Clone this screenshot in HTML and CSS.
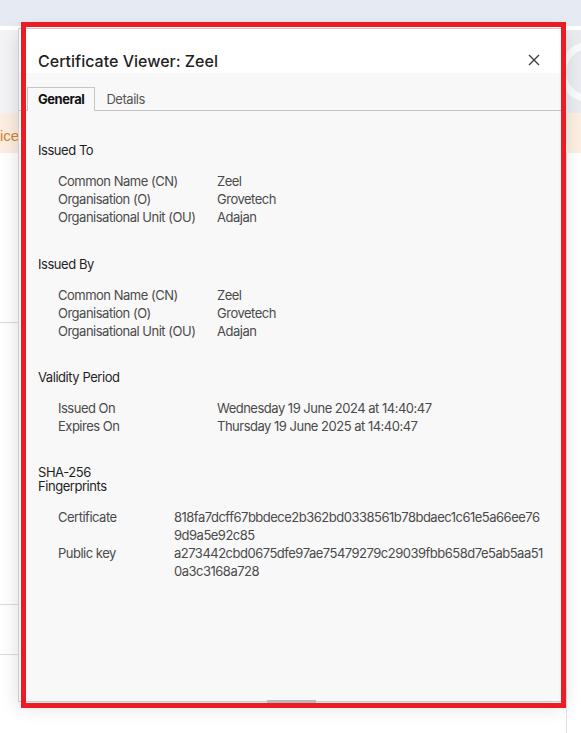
FILE: index.html
```html
<!DOCTYPE html>
<html lang="en">
<head>
<meta charset="utf-8">
<title>Certificate Viewer: Zeel</title>
<link rel="stylesheet" href="styles.css">
</head>
<body>
<div class="page">
  <div class="topbar"></div>
  <div class="app">
    <div class="hero"><div class="logo"></div></div>
    <div class="banner"><span class="banner-text">ice</span></div>
    <div class="list">
      <div class="list-row row-a"></div>
      <div class="list-row row-b"></div>
      <div class="list-row row-c"></div>
      <div class="list-row row-d"></div>
    </div>
  </div>
</div>

<div class="dialog" role="dialog" aria-label="Certificate Viewer: Zeel">
  <div class="dlg-head">
    <h1 class="dlg-title">Certificate Viewer: Zeel</h1>
    <button class="close" aria-label="Close">
      <svg width="12" height="12" viewBox="0 0 12 12"><path d="M1 1 L11 11 M11 1 L1 11" stroke="#3c3c3c" stroke-width="1.4" fill="none"/></svg>
    </button>
  </div>
  <div class="tabs">
    <div class="tab active">General</div>
    <div class="tab">Details</div>
  </div>
  <div class="content">
    <section class="sec">
      <h2 class="sec-title">Issued To</h2>
      <div class="rows">
        <div class="lab">Common Name (CN)</div><div class="val">Zeel</div>
        <div class="lab">Organisation (O)</div><div class="val">Grovetech</div>
        <div class="lab">Organisational Unit (OU)</div><div class="val">Adajan</div>
      </div>
    </section>
    <section class="sec">
      <h2 class="sec-title">Issued By</h2>
      <div class="rows">
        <div class="lab">Common Name (CN)</div><div class="val">Zeel</div>
        <div class="lab">Organisation (O)</div><div class="val">Grovetech</div>
        <div class="lab">Organisational Unit (OU)</div><div class="val">Adajan</div>
      </div>
    </section>
    <section class="sec">
      <h2 class="sec-title">Validity Period</h2>
      <div class="rows">
        <div class="lab">Issued On</div><div class="val">Wednesday 19 June 2024 at 14:40:47</div>
        <div class="lab">Expires On</div><div class="val">Thursday 19 June 2025 at 14:40:47</div>
      </div>
    </section>
    <section class="sec">
      <h2 class="sec-title">SHA-256 Fingerprints</h2>
      <div class="rows rows-fp">
        <div class="lab">Certificate</div><div class="val hash">818fa7dcff67bbdece2b362bd0338561b78bdaec1c61e5a66ee76<br>9d9a5e92c85</div>
        <div class="lab">Public key</div><div class="val hash">a273442cbd0675dfe97ae75479279c29039fbb658d7e5ab5aa51<br>0a3c3168a728</div>
      </div>
    </section>
  </div>
  <div class="dlg-foot"><div class="grip"></div></div>
</div>

<div class="highlight"></div>
</body>
</html>
```

FILE: styles.css
```css
* { box-sizing: border-box; }
html, body { margin: 0; padding: 0; }
body {
  width: 581px;
  height: 733px;
  overflow: hidden;
  background: #fff;
  font-family: Inter, "Liberation Sans", sans-serif;
  position: relative;
}
.page { display: flex; flex-direction: column; }
.topbar { height: 26px; background: #e6eaf2; }
.app { background: #fff; padding-top: 4px; }
.hero {
  height: 83px;
  background: linear-gradient(to right, #f4f4f6, #e9ebf1);
  display: flex;
  align-items: center;
  justify-content: flex-end;
  overflow: hidden;
}
.logo {
  width: 60px; height: 60px;
  border-radius: 50%;
  border: 7px solid rgba(255,255,255,0.75);
  margin-right: -38px;
}
.banner {
  height: 40px;
  padding-top: 5px;
  background: #fcefe1;
  display: flex;
  align-items: center;
  overflow: hidden;
}
.banner-text {
  color: #d3822f;
  font-size: 15px;
  font-family: "Liberation Sans", sans-serif;
}
.list { width: 567px; border-right: 1px solid #e2e2e2; }
.list-row { border-bottom: 1px solid #dcdcdc; }
.row-a { height: 170px; }
.row-b { height: 282px; }
.row-c { height: 50px; }
.row-d { height: 80px; border-bottom: none; }

.dialog {
  position: absolute;
  left: 18px;
  top: 28px;
  width: 546px;
  height: 674px;
  background: #f8f8f8;
  border: 1px solid #cdcdcd;
  box-shadow: 0 4px 18px rgba(0,0,0,0.14);
  display: flex;
  flex-direction: column;
}
.dlg-head {
  height: 44px;
  background: #fff;
  display: flex;
  align-items: flex-start;
  justify-content: space-between;
  padding: 22px 19px 0 19px;
}
.dlg-title {
  margin: 0;
  font-size: 16px;
  line-height: 20px;
  font-weight: 500;
  color: #1f1f1f;
}
.close {
  width: 20px; height: 20px;
  margin-top: -1px;
  padding: 0;
  border: none;
  background: transparent;
  display: flex;
  align-items: center;
  justify-content: center;
}
.tabs {
  display: flex;
  padding: 14px 0 0 8px;
  border-bottom: 1px solid #c6c6c6;
}
.tab {
  height: 23px;
  padding: 0 11px;
  font-size: 13px;
  letter-spacing: -0.45px;
  line-height: 24px;
  color: #555;
}
.tab.active {
  height: 24px;
  margin-bottom: -1px;
  border: 1px solid #c6c6c6;
  border-bottom: none;
  background: #f8f8f8;
  padding: 0 10px;
  line-height: 23px;
  color: #111;
  font-weight: 700;
}
.content { padding: 32px 0 0 19px; }
.sec + .sec { margin-top: 30px; }
.sec:nth-child(2) { margin-top: 31px; }
.sec-title {
  margin: 0;
  max-width: 110px;
  font-size: 13px;
  letter-spacing: -0.45px;
  line-height: 14px;
  font-weight: 400;
  color: #1f1f1f;
}
.rows {
  display: grid;
  grid-template-columns: 159px 1fr;
  margin-top: 15px;
  padding-left: 20px;
  font-size: 13px;
  letter-spacing: -0.5px;
  line-height: 18px;
  color: #4a4a4a;
}
.rows-fp { grid-template-columns: 116px 1fr; }
.hash { white-space: nowrap; }
.dlg-foot {
  margin-top: auto;
  margin-bottom: -2px;
  display: flex;
  justify-content: center;
}
.grip { width: 49px; height: 3px; background: #b8b8b8; }

.highlight {
  position: absolute;
  left: 21px;
  top: 22px;
  width: 545px;
  height: 686px;
  border: 5px solid #ec1c24;
  pointer-events: none;
}
```
